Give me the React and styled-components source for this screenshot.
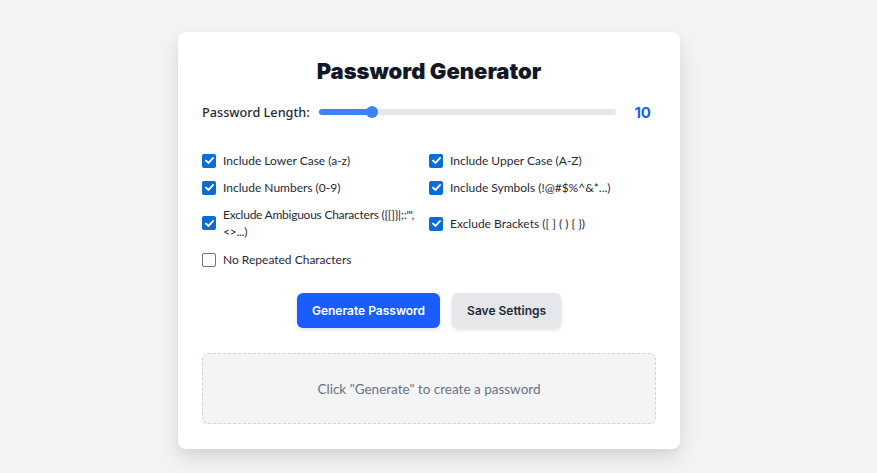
import React, { useState } from "react";
import styled, { createGlobalStyle } from "styled-components";

const Global = createGlobalStyle`
  html, body { margin: 0; padding: 0; background: #f3f4f6; }
  body { font-family: "Noto Sans", "Open Sans", sans-serif; color: #1f2937; }
`;

const Page = styled.div`
  display: flex;
  justify-content: center;
  padding: 32px 19px 0 0;
  min-height: 473px;
  box-sizing: border-box;
`;

const Card = styled.div`
  width: 502px;
  box-sizing: border-box;
  background: #fff;
  border-radius: 8px;
  padding: 24px 24px 25px;
  box-shadow: 0 10px 25px rgba(0, 0, 0, 0.1), 0 4px 10px rgba(0, 0, 0, 0.05);
  height: 417px;
`;

const Title = styled.h1`
  margin: 0;
  text-align: center;
  font-family: "Inter", sans-serif;
  font-weight: 900;
  font-size: 22px;
  line-height: 30px;
  color: #111827;
`;

const LengthRow = styled.div`
  display: flex;
  align-items: center;
  margin-top: 15px;
  height: 22px;
`;

const Label = styled.span`
  font-size: 12.7px;
  font-weight: 500;
  color: #1f2937;
  margin-right: 9px;
`;

const Track = styled.div`
  position: relative;
  flex: 1;
  height: 6px;
  border-radius: 3px;
  background: #e5e7eb;
`;

const Fill = styled.div`
  height: 100%;
  border-radius: 3px;
  background: #3b82f6;
`;

const Thumb = styled.div`
  position: absolute;
  top: 50%;
  width: 12px;
  height: 12px;
  border-radius: 50%;
  background: #3b82f6;
  transform: translate(-50%, -50%);
`;

const Value = styled.span`
  width: 35px;
  text-align: right;
  font-family: "Inter", sans-serif;
  font-weight: 700;
  font-size: 15px;
  color: #1a5cff;
  margin-right: 5px;
`;

const Options = styled.div`
  display: grid;
  grid-template-columns: 227px 1fr;
  row-gap: 10px;
  margin-top: 29px;
`;

const Option = styled.label`
  display: flex;
  align-items: center;
  font-family: "Lato", sans-serif;
  font-size: 12px;
  line-height: 17px;
  color: #1f2937;
  min-height: 17px;
  padding: ${(p) => (p.$tall ? "0 0 1px 0" : "0")};
  letter-spacing: ${(p) => (p.$tall ? "-0.25px" : "normal")};
  white-space: ${(p) => (p.$tall ? "nowrap" : "normal")};
`;

const Box = styled.span`
  flex: none;
  width: 14px;
  height: 14px;
  border-radius: 2px;
  margin-right: 7px;
  box-sizing: border-box;
  display: flex;
  align-items: center;
  justify-content: center;
  background: ${(p) => (p.$checked ? "#0b6cd6" : "#fff")};
  border: ${(p) => (p.$checked ? "none" : "1px solid #767676")};
`;

const Buttons = styled.div`
  display: flex;
  justify-content: center;
  gap: 12px;
  margin-top: 25px;
`;

const Button = styled.button`
  height: 35px;
  border: none;
  border-radius: 6px;
  padding: 0 15px;
  font-family: "Inter", sans-serif;
  font-weight: 600;
  font-size: 12px;
  cursor: pointer;
  background: ${(p) => (p.$primary ? "#1a5cff" : "#e5e7eb")};
  color: ${(p) => (p.$primary ? "#fff" : "#1f2937")};
  box-shadow: 0 2px 4px rgba(0, 0, 0, 0.12);
`;

const Output = styled.div`
  margin-top: 25px;
  height: 71px;
  box-sizing: border-box;
  border: 1px dashed #d1d5db;
  border-radius: 6px;
  background: #f3f4f6;
  display: flex;
  align-items: center;
  justify-content: center;
  font-family: "Lato", sans-serif;
  font-size: 13.5px;
  color: #6b7280;
`;

const Check = () => (
  <svg width="11" height="11" viewBox="0 0 12 12">
    <path d="M2.3 6.2 L4.9 8.7 L9.8 3.4" fill="none" stroke="#fff" strokeWidth="2" strokeLinecap="square" />
  </svg>
);

const opts = [
  ["Include Lower Case (a-z)", true],
  ["Include Upper Case (A-Z)", true],
  ["Include Numbers (0-9)", true],
  ["Include Symbols (!@#$%^&*...)", true],
  [["Exclude Ambiguous Characters ({[]}|;:'\",", "<>...)"], true, true],
  ["Exclude Brackets ([ ] ( ) { })", true],
  ["No Repeated Characters", false],
];

export default function App() {
  const [pct] = useState(18);
  return (
    <>
      <Global />
      <Page>
        <Card>
          <Title>Password Generator</Title>
          <LengthRow>
            <Label>Password Length:</Label>
            <Track>
              <Fill style={{ width: `${pct}%` }} />
              <Thumb style={{ left: `${pct}%` }} />
            </Track>
            <Value>10</Value>
          </LengthRow>
          <Options>
            {opts.map(([t, c, tall], i) => (
              <Option key={i} $tall={tall}>
                <Box $checked={c}>{c && <Check />}</Box>
                {Array.isArray(t) ? (
                  <span>
                    {t[0]}
                    <br />
                    {t[1]}
                  </span>
                ) : (
                  <span>{t}</span>
                )}
              </Option>
            ))}
          </Options>
          <Buttons>
            <Button $primary>Generate Password</Button>
            <Button>Save Settings</Button>
          </Buttons>
          <Output>Click "Generate" to create a password</Output>
        </Card>
      </Page>
    </>
  );
}
